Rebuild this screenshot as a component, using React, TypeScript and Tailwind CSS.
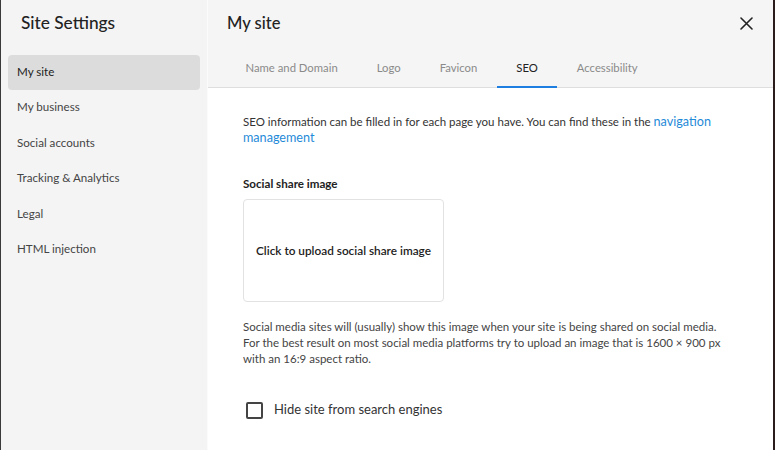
import React from "react";

const navItems = ["My site", "My business", "Social accounts", "Tracking & Analytics", "Legal", "HTML injection"];
const tabs = ["Name and Domain", "Logo", "Favicon", "SEO", "Accessibility"];

export default function App() {
  return (
    <div
      className="w-[775px] h-[450px] flex overflow-hidden bg-white text-[#333]"
      style={{ fontFamily: "Lato, 'Noto Sans', sans-serif" }}
    >
      <div className="w-[1px] bg-[#3a3a3a]" />
      <aside className="w-[206px] bg-[#f4f4f4] flex flex-col">
        <div className="h-[46px] flex items-center pl-[20px] text-[17.3px] text-[#222] font-medium">Site Settings</div>
        <nav className="flex flex-col px-[7px] pt-[9px]">
          {navItems.map((item, i) => (
            <div
              key={item}
              className={`h-[35.4px] flex items-center pl-[9px] pb-[2px] text-[11.6px] rounded-[4px] ${
                i === 0 ? "bg-[#dcdcdc] text-[#222]" : "text-[#444]"
              }`}
            >
              {item}
            </div>
          ))}
        </nav>
      </aside>
      <div className="w-[1px] bg-[#fbfbfb]" />
      <main className="flex-1 flex flex-col">
        <header className="h-[88px] bg-[#f5f5f5] border-b border-[#dedede] flex flex-col">
          <div className="h-[46px] flex items-center justify-between pl-[19px] pr-[19px]">
            <span className="text-[16.5px] text-[#222] font-medium">My site</span>
            <svg width="13" height="13" viewBox="0 0 13 13" className="mr-[1px]">
              <path d="M1 1L12 12M12 1L1 12" stroke="#222" strokeWidth="1.6" strokeLinecap="round" />
            </svg>
          </div>
          <div className="flex flex-1 pl-[18px]">
            {tabs.map((t) => (
              <div
                key={t}
                className={`px-[19.5px] pt-[4px] flex items-center text-[11.3px] border-b-2 -mb-[1px] ${
                  t === "SEO" ? "border-[#1f7fe0] text-[#222]" : "border-transparent text-[#8a8a8a]"
                }`}
              >
                {t}
              </div>
            ))}
          </div>
        </header>
        <section className="flex-1 pl-[35px] pr-[40px] pt-[26px]">
          <p className="text-[11.5px] leading-[16px] text-[#333]">
            SEO information can be filled in for each page you have. You can find these in the{" "}
            <span className="text-[12.6px] leading-[12px] text-[#1f8ad8]">navigation management</span>
          </p>
          <div className="mt-[29px] text-[11.6px] font-bold text-[#222]">Social share image</div>
          <div className="mt-[7px] w-[201px] h-[103px] border border-[#e2e2e2] rounded-[4px] flex items-center justify-center text-[11.8px] font-semibold text-[#222]">
            Click to upload social share image
          </div>
          <p className="mt-[17px] text-[11.5px] leading-[16px] text-[#444]">
            Social media sites will (usually) show this image when your site is being shared on social media.
            <br />
            For the best result on most social media platforms try to upload an image that is 1600 × 900 px
            <br />
            with an 16:9 aspect ratio.
          </p>
          <label className="mt-[33px] flex items-center gap-[11px] pl-[3px]">
            <span className="w-[17px] h-[17px] border-2 border-[#444] rounded-[2px] bg-white" />
            <span className="text-[13px] text-[#333]">Hide site from search engines</span>
          </label>
        </section>
      </main>
      <div className="w-[2px] bg-[#2a1c1c]" />
    </div>
  );
}
